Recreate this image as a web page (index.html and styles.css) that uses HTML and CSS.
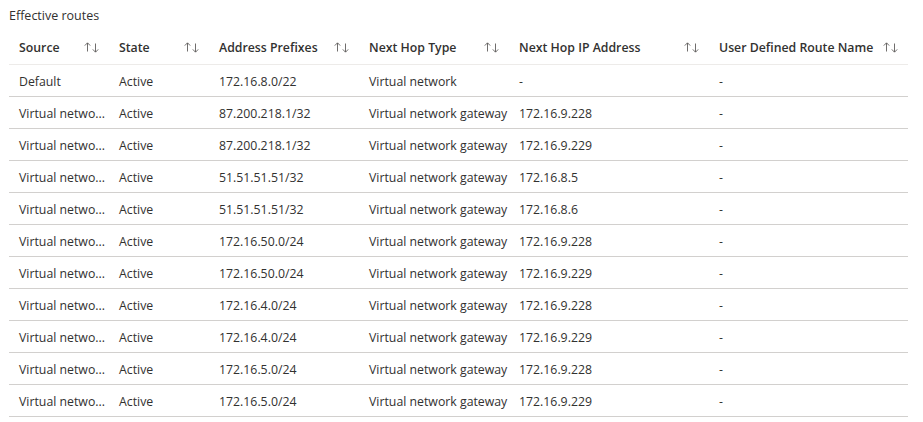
FILE: index.html
```html
<!DOCTYPE html>
<html>
<head>
<meta charset="utf-8">
<link rel="stylesheet" href="styles.css">
</head>
<body>
<div class="panel">
  <div class="title">Effective routes</div>
  <table class="routes">
    <colgroup>
      <col class="c1"><col class="c2"><col class="c3"><col class="c4"><col class="c5"><col class="c6">
    </colgroup>
    <thead>
      <tr>
        <th><div class="hd"><span>Source</span><svg class="sort" viewBox="0 0 16 11" width="16" height="11"><path d="M3.5 9.5V1M0.8 3.6L3.5 0.8L6.2 3.6M11.5 1.5V10M8.8 7.4L11.5 10.2L14.2 7.4"/></svg></div></th>
        <th><div class="hd"><span>State</span><svg class="sort" viewBox="0 0 16 11" width="16" height="11"><path d="M3.5 9.5V1M0.8 3.6L3.5 0.8L6.2 3.6M11.5 1.5V10M8.8 7.4L11.5 10.2L14.2 7.4"/></svg></div></th>
        <th><div class="hd"><span>Address Prefixes</span><svg class="sort" viewBox="0 0 16 11" width="16" height="11"><path d="M3.5 9.5V1M0.8 3.6L3.5 0.8L6.2 3.6M11.5 1.5V10M8.8 7.4L11.5 10.2L14.2 7.4"/></svg></div></th>
        <th><div class="hd"><span>Next Hop Type</span><svg class="sort" viewBox="0 0 16 11" width="16" height="11"><path d="M3.5 9.5V1M0.8 3.6L3.5 0.8L6.2 3.6M11.5 1.5V10M8.8 7.4L11.5 10.2L14.2 7.4"/></svg></div></th>
        <th><div class="hd"><span>Next Hop IP Address</span><svg class="sort" viewBox="0 0 16 11" width="16" height="11"><path d="M3.5 9.5V1M0.8 3.6L3.5 0.8L6.2 3.6M11.5 1.5V10M8.8 7.4L11.5 10.2L14.2 7.4"/></svg></div></th>
        <th><div class="hd"><span>User Defined Route Name</span><svg class="sort" viewBox="0 0 16 11" width="16" height="11"><path d="M3.5 9.5V1M0.8 3.6L3.5 0.8L6.2 3.6M11.5 1.5V10M8.8 7.4L11.5 10.2L14.2 7.4"/></svg></div></th>
      </tr>
    </thead>
    <tbody>
      <tr><td>Default</td><td>Active</td><td>172.16.8.0/22</td><td>Virtual network</td><td>-</td><td>-</td></tr>
      <tr><td>Virtual netwo...</td><td>Active</td><td>87.200.218.1/32</td><td>Virtual network gateway</td><td>172.16.9.228</td><td>-</td></tr>
      <tr><td>Virtual netwo...</td><td>Active</td><td>87.200.218.1/32</td><td>Virtual network gateway</td><td>172.16.9.229</td><td>-</td></tr>
      <tr><td>Virtual netwo...</td><td>Active</td><td>51.51.51.51/32</td><td>Virtual network gateway</td><td>172.16.8.5</td><td>-</td></tr>
      <tr><td>Virtual netwo...</td><td>Active</td><td>51.51.51.51/32</td><td>Virtual network gateway</td><td>172.16.8.6</td><td>-</td></tr>
      <tr><td>Virtual netwo...</td><td>Active</td><td>172.16.50.0/24</td><td>Virtual network gateway</td><td>172.16.9.228</td><td>-</td></tr>
      <tr><td>Virtual netwo...</td><td>Active</td><td>172.16.50.0/24</td><td>Virtual network gateway</td><td>172.16.9.229</td><td>-</td></tr>
      <tr><td>Virtual netwo...</td><td>Active</td><td>172.16.4.0/24</td><td>Virtual network gateway</td><td>172.16.9.228</td><td>-</td></tr>
      <tr><td>Virtual netwo...</td><td>Active</td><td>172.16.4.0/24</td><td>Virtual network gateway</td><td>172.16.9.229</td><td>-</td></tr>
      <tr><td>Virtual netwo...</td><td>Active</td><td>172.16.5.0/24</td><td>Virtual network gateway</td><td>172.16.9.228</td><td>-</td></tr>
      <tr><td>Virtual netwo...</td><td>Active</td><td>172.16.5.0/24</td><td>Virtual network gateway</td><td>172.16.9.229</td><td>-</td></tr>
    </tbody>
  </table>
</div>
</body>
</html>
```

FILE: styles.css
```css
html, body {
  margin: 0;
  padding: 0;
  background: #ffffff;
}
body {
  font-family: "Open Sans", "Noto Sans", sans-serif;
  font-size: 12.3px;
  color: #323130;
}
.panel {
  padding: 0 15px 0 9px;
}
.title {
  height: 32px;
  line-height: 31px;
  font-size: 12.5px;
  color: #323130;
}
.routes {
  border-collapse: collapse;
  table-layout: fixed;
  width: 899px;
}
.c1 { width: 100px; }
.c2 { width: 100px; }
.c3 { width: 150px; }
.c4 { width: 150px; }
.c5 { width: 200px; }
.c6 { width: 199px; }
.routes th {
  height: 30px;
  padding: 0 9px 2px 10px;
  font-weight: 600;
  text-align: left;
  border-bottom: 1px solid #edebe9;
  white-space: nowrap;
}
.hd {
  display: flex;
  align-items: center;
  justify-content: space-between;
}
.sort {
  flex: none;
  stroke: #605e5c;
  stroke-width: 0.9;
  fill: none;
}
.routes td {
  height: 30px;
  padding: 1px 10px 0;
  border-bottom: 1px solid #d2d0ce;
  white-space: nowrap;
  overflow: hidden;
}
```
